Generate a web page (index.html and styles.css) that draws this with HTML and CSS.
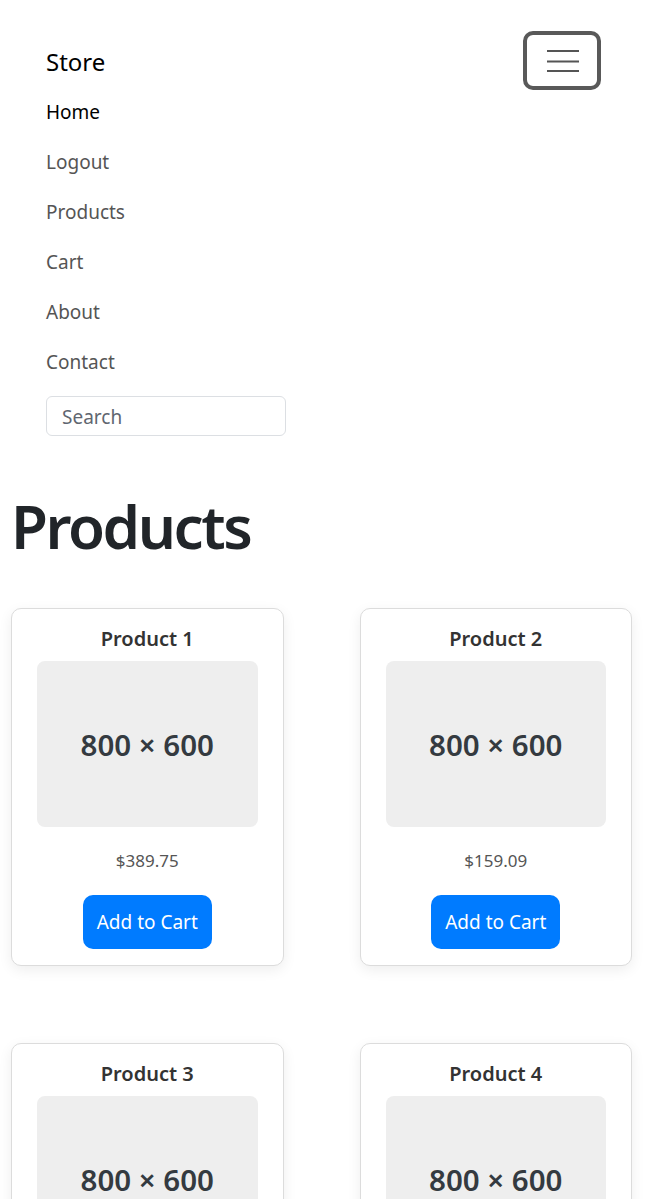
FILE: index.html
```html
<!DOCTYPE html>
<html lang="en">
<head>
<meta charset="utf-8">
<title>Store</title>
<link rel="stylesheet" href="styles.css">
</head>
<body>
<nav class="navbar">
  <div class="navbar-top">
    <a class="brand" href="#">Store</a>
    <button class="toggler" aria-label="Toggle navigation">
      <svg width="32" height="24" viewBox="0 0 32 24"><path d="M0 2h32M0 12.5h32M0 22h32" stroke="#555" stroke-width="2.2" fill="none"/></svg>
    </button>
  </div>
  <ul class="nav-list">
    <li><a class="nav-link active" href="#">Home</a></li>
    <li><a class="nav-link" href="#">Logout</a></li>
    <li><a class="nav-link" href="#">Products</a></li>
    <li><a class="nav-link" href="#">Cart</a></li>
    <li><a class="nav-link" href="#">About</a></li>
    <li><a class="nav-link" href="#">Contact</a></li>
  </ul>
  <form class="search-form"><input class="search-input" type="search" placeholder="Search"></form>
</nav>
<main class="main">
  <h1 class="page-title">Products</h1>
  <div class="grid">
    <div class="card">
      <h5 class="card-title">Product 1</h5>
      <div class="placeholder">800 × 600</div>
      <p class="price">$389.75</p>
      <button class="btn">Add to Cart</button>
    </div>
    <div class="card">
      <h5 class="card-title">Product 2</h5>
      <div class="placeholder">800 × 600</div>
      <p class="price">$159.09</p>
      <button class="btn">Add to Cart</button>
    </div>
    <div class="card">
      <h5 class="card-title">Product 3</h5>
      <div class="placeholder">800 × 600</div>
      <p class="price">$274.50</p>
      <button class="btn">Add to Cart</button>
    </div>
    <div class="card">
      <h5 class="card-title">Product 4</h5>
      <div class="placeholder">800 × 600</div>
      <p class="price">$98.20</p>
      <button class="btn">Add to Cart</button>
    </div>
  </div>
</main>
</body>
</html>
```
FILE: styles.css
```css
* { box-sizing: border-box; }
html, body { margin: 0; padding: 0; }
body {
  font-family: "Segoe UI", "Noto Sans", "Open Sans", sans-serif;
  color: #212529;
  background: #fff;
  font-size: 20px;
}
.navbar { padding: 31px 45px 0 46px; }
.navbar-top {
  display: flex;
  justify-content: space-between;
  align-items: center;
  height: 59px;
}
.brand {
  font-size: 24px;
  color: #000;
  text-decoration: none;
  line-height: 36px;
  margin-top: 3px;
}
.toggler {
  width: 78px;
  height: 59px;
  border: 4px solid #595959;
  border-radius: 10px;
  background: #fff;
  display: flex;
  align-items: center;
  justify-content: center;
  padding: 0 0 0 1px;
}
.nav-list {
  list-style: none;
  margin: -3px 0 0;
  padding: 0;
}
.nav-link {
  display: block;
  padding: 10px 0;
  line-height: 30px;
  font-size: 19px;
  color: #555;
  text-decoration: none;
}
.nav-link.active { color: #000; }
.search-form { margin: 9px 0 0; }
.search-input {
  width: 240px;
  height: 40px;
  border: 1px solid #dcdfe3;
  border-radius: 6px;
  padding: 2px 15px 0;
  font-family: inherit;
  font-size: 19px;
  color: #495057;
  outline: none;
}
.search-input::placeholder { color: #5f6670; }
.main { padding: 0 14px 0 11px; }
.page-title {
  font-size: 60px;
  font-weight: 600;
  line-height: 76px;
  margin: 52px 0 0 0;
  color: #212529;
  letter-spacing: -2.4px;
}
.grid {
  display: grid;
  grid-template-columns: 1fr 1fr;
  column-gap: 76px;
  row-gap: 77px;
  margin-top: 44px;
}
.card {
  border: 1px solid #dcdcdc;
  border-radius: 10px;
  box-shadow: 0 4px 14px rgba(0, 0, 0, 0.07);
  padding: 15px 25px 16px;
  display: flex;
  flex-direction: column;
  align-items: center;
  background: #fff;
}
.card-title {
  margin: 0;
  font-size: 20px;
  font-weight: 600;
  line-height: 30px;
  color: #333;
}
.placeholder {
  margin-top: 7px;
  width: 100%;
  height: 166px;
  background: #eeeeee;
  border-radius: 8px;
  display: flex;
  align-items: center;
  justify-content: center;
  font-size: 29.5px;
  font-weight: 600;
  color: #343a40;
}
.price {
  margin: 20px 0 0;
  font-size: 17px;
  line-height: 27px;
  color: #555;
}
.btn {
  margin-top: 21px;
  height: 54px;
  padding: 0 14px;
  border: none;
  border-radius: 10px;
  background: #007bff;
  color: #fff;
  font-family: inherit;
  font-size: 19px;
}
```
